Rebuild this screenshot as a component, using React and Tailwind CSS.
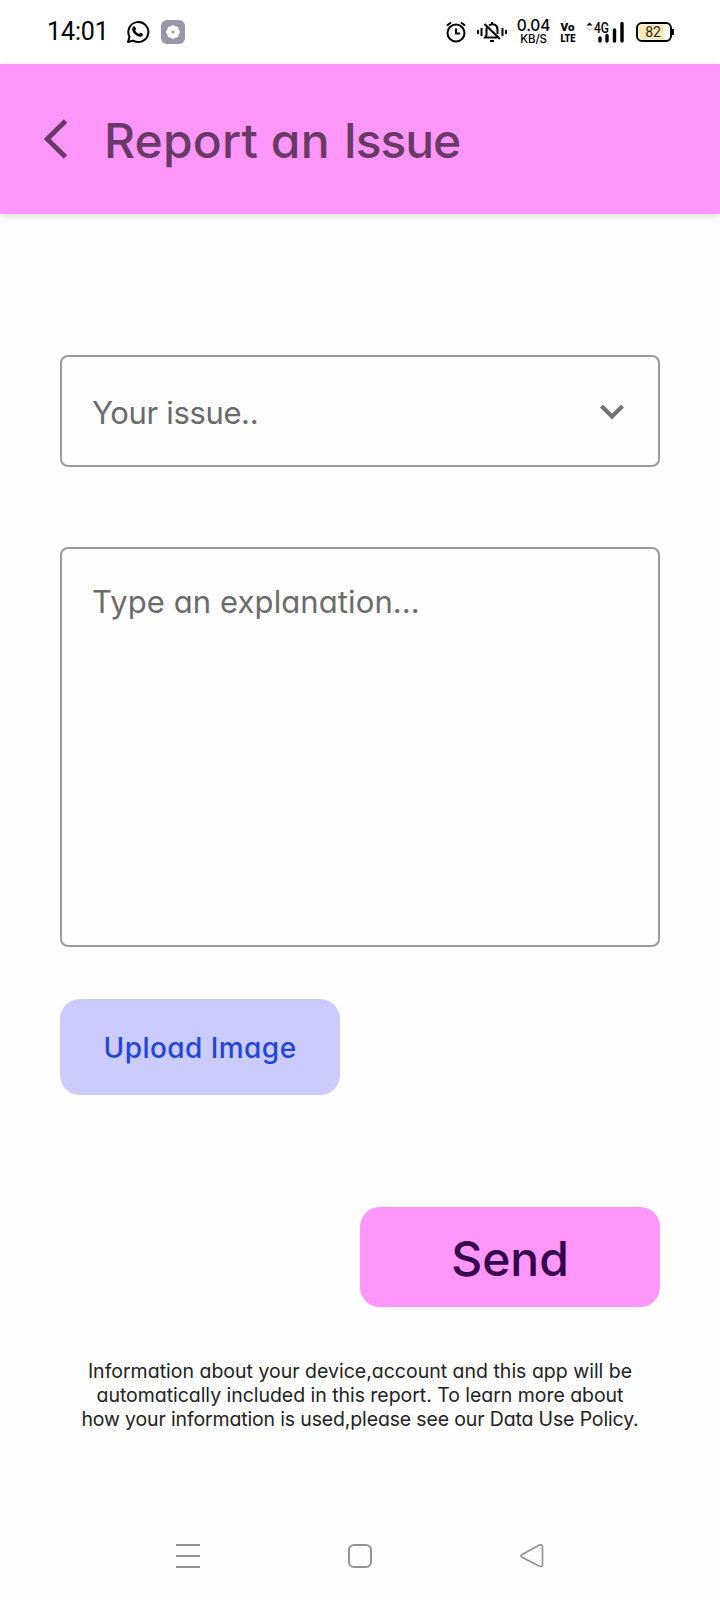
function StatusBar() {
  return (
    <header className="flex h-16 shrink-0 items-center bg-white pl-[47px] pr-[45px] text-black">
      <span className="w-[62px] whitespace-nowrap font-['Roboto',sans-serif] text-[25px] font-normal leading-8 tracking-[-0.1px]">14:01</span>
      <svg className="ml-[17px] size-6" viewBox="0 0 24 24" fill="none">
        <path d="M2 22l1.5-5.3A10 10 0 1 1 7.2 20.600z" stroke="currentColor" strokeWidth="2" strokeLinejoin="round" />
        <path d="M7.300 6.800c.5-.6 1.500-.6 1.800 0l.9 2c.2.500-.5 1.200-.8 1.600.8 1.600 2 2.700 3.700 3.500.500-.4 1.100-1.300 1.600-1.100l2.100 1c.6.400.3 1.700-.3 2.200-1.100 1.100-3.200.9-5.100-.1-2.300-1.300-4.100-3.300-4.800-5.200-.5-1.500-.1-3 .9-3.900z" fill="currentColor" />
      </svg>
      <svg className="ml-[11px] size-6" viewBox="0 0 24 24">
        <rect width="24" height="24" rx="6" fill="#9997a8" />
        <g fill="#fff">
          <rect x="6.500" y="6.500" width="11" height="11" rx="2" />
          <rect x="6.500" y="6.500" width="11" height="11" rx="2" transform="rotate(45 12 12)" />
        </g>
        <circle cx="12" cy="12" r="1.500" fill="#93a596" />
      </svg>
      <div className="ml-auto flex items-center">
        <svg className="h-6 w-5" viewBox="0 0 20 24" fill="none" stroke="currentColor" strokeWidth="2">
          <circle cx="10" cy="13" r="8.500" />
          <path d="M10 8.500v5h4M1 5.500l4-3M15 2.500l4 3" />
        </svg>
        <svg className="ml-[11px] h-6 w-[30px]" viewBox="0 0 30 24" fill="none" stroke="currentColor" strokeWidth="2">
          <path d="M1 10v4M4.500 8v8M25.500 8v8M29 10v4M9.500 7.500V15l-1.500 2.500h12.500M12 5.500c3-2.500 8.500-1.500 8.500 4V14M15 2v2M13 21h4M7.500 4l15.500 15" />
        </svg>
        <div className="ml-[10px] flex w-[33px] flex-col items-center font-['Inter',sans-serif] font-medium">
          <span className="text-[15.500px] leading-[14px] tracking-[-0.1px]">0.04</span>
          <span className="mt-[1px] text-[11.500px] leading-[11px] tracking-[-0.2px]">KB/S</span>
        </div>
        <svg className="ml-[10px] h-7 w-[17px]" viewBox="0 -2 17 28" fontFamily="Roboto, sans-serif" fontWeight="900">
          <text x="0.500" y="11" fontSize="11.500" textLength="14" lengthAdjust="spacingAndGlyphs">Vo</text>
          <text x="0.500" y="22" fontSize="11.500" textLength="15" lengthAdjust="spacingAndGlyphs">LTE</text>
        </svg>
        <svg className="ml-[9px] h-6 w-[39px]" viewBox="0 0 39 24">
          <path d="M.5 5.500L3.500 2.500l3 3z" fill="#000" />
          <path d="M1 8l2.500 2.500L6 8" fill="none" stroke="#ccc" strokeWidth="1.200" />
          <text x="8" y="12.500" fontFamily="Roboto, sans-serif" fontSize="14" fontWeight="500" textLength="15" lengthAdjust="spacingAndGlyphs">4G</text>
          <path d="M14 18v3M21 15.500V21M28.500 10V21M36 3.500V21" stroke="#000" strokeWidth="3.400" strokeLinecap="round" />
        </svg>
        <svg className="ml-[10px] h-6 w-10" viewBox="0 0 40 24">
          <rect x="2" y="3" width="34" height="18" rx="5" fill="#fff" stroke="#000" strokeWidth="2" />
          <path d="M7 5h22.500v14H7a3 3 0 0 1-3-3V8a3 3 0 0 1 3-3z" fill="#ffeab5" />
          <path d="M38 9v6" stroke="#000" strokeWidth="2" />
          <text x="18" y="17" fontFamily="Roboto, sans-serif" fontSize="14" fill="#222" textAnchor="middle">82</text>
        </svg>
      </div>
    </header>
  );
}

function TitleBar() {
  return (
    <div className="z-10 flex h-[150px] shrink-0 items-center bg-[#ff96f9] pl-11 text-[#693a68] shadow-[0_2px_8px_rgba(0,0,0,0.14)]">
      <svg className="h-10 w-[23px]" viewBox="0 0 23 40" fill="none" stroke="currentColor" strokeWidth="4.800">
        <path d="M21.500 2L3.200 20l18.300 18" />
      </svg>
      <h1 className="ml-[37px] mt-[3px] whitespace-nowrap text-[48px] font-medium leading-[60px] tracking-[0.15px]">
        Report an <span className="ml-[1px] tracking-[-1.100px]">Issue</span>
      </h1>
    </div>
  );
}

function NavBar() {
  return (
    <nav className="mt-auto flex h-[88px] shrink-0 items-center justify-between px-[176px] text-[#939393]">
      <svg className="size-6" viewBox="0 0 24 24" stroke="currentColor" strokeWidth="2">
        <path d="M0 1h24M0 12h24M0 23h24" />
      </svg>
      <svg className="size-6" viewBox="0 0 24 24" fill="none" stroke="currentColor" strokeWidth="2">
        <rect x="1" y="1" width="22" height="22" rx="5" />
      </svg>
      <svg className="size-6" viewBox="0 0 24 24" fill="none" stroke="currentColor" strokeWidth="1.700">
        <path d="M2 10.500L19 1.300Q22.500 0 22.500 3V20.500Q22.500 23.500 19 22L2 13.200Q0 12 2 10.500z" />
      </svg>
    </nav>
  );
}

export default function App() {
  return (
    <div className="flex h-[1600px] w-[720px] flex-col overflow-hidden bg-[#fefefe] font-['Inter',sans-serif] [font-feature-settings:'cv11']">
      <StatusBar />
      <TitleBar />
      <main className="flex flex-col px-[60px] pt-[141px]">
        <button className="flex h-28 items-center justify-between rounded-lg border-2 border-[#9b9b9b] pl-[30px] pr-[34px] text-[#6b6b6b]">
          <span className="mt-[4px] whitespace-nowrap text-[31px] font-normal leading-10 tracking-[-0.350px]">Your issue..</span>
          <svg className="mt-[2px] h-4 w-6" viewBox="0 0 24 16" fill="none" stroke="#757575" strokeWidth="4.200">
            <path d="M1.500 2L12 12.500 22.500 2" />
          </svg>
        </button>
        <div className="mt-20 h-[400px] rounded-lg border-2 border-[#9b9b9b] pl-[30px] pt-[33px] text-[31px] font-normal leading-10 tracking-[0.1px] text-[#6b6b6b]">
          <span className="whitespace-nowrap">Type an explanation...</span>
        </div>
        <button className="mt-[52px] flex h-24 w-[280px] items-center justify-center rounded-[20px] bg-[#cbcbff] text-[28px] font-medium tracking-[0.45px] text-[#2046d8]">
          <span className="mt-[1px] whitespace-nowrap">Upload Image</span>
        </button>
        <button className="mt-28 flex h-[100px] w-[300px] items-center justify-center self-end rounded-[20px] bg-[#ff96f9] text-[48px] font-medium text-[#35004c]">
          <span className="mt-[3px] whitespace-nowrap">Send</span>
        </button>
        <p className="mt-[52px] flex flex-col items-center whitespace-nowrap text-[19.5px] font-normal leading-6 text-[#222]">
          <span>Information about your device,account and this app will be</span>
          <span className="tracking-[-0.04px]">automatically included in this report. To learn more about</span>
          <span className="tracking-[-0.15px]">how your information is used,please see our Data Use Policy.</span>
        </p>
      </main>
      <NavBar />
    </div>
  );
}
